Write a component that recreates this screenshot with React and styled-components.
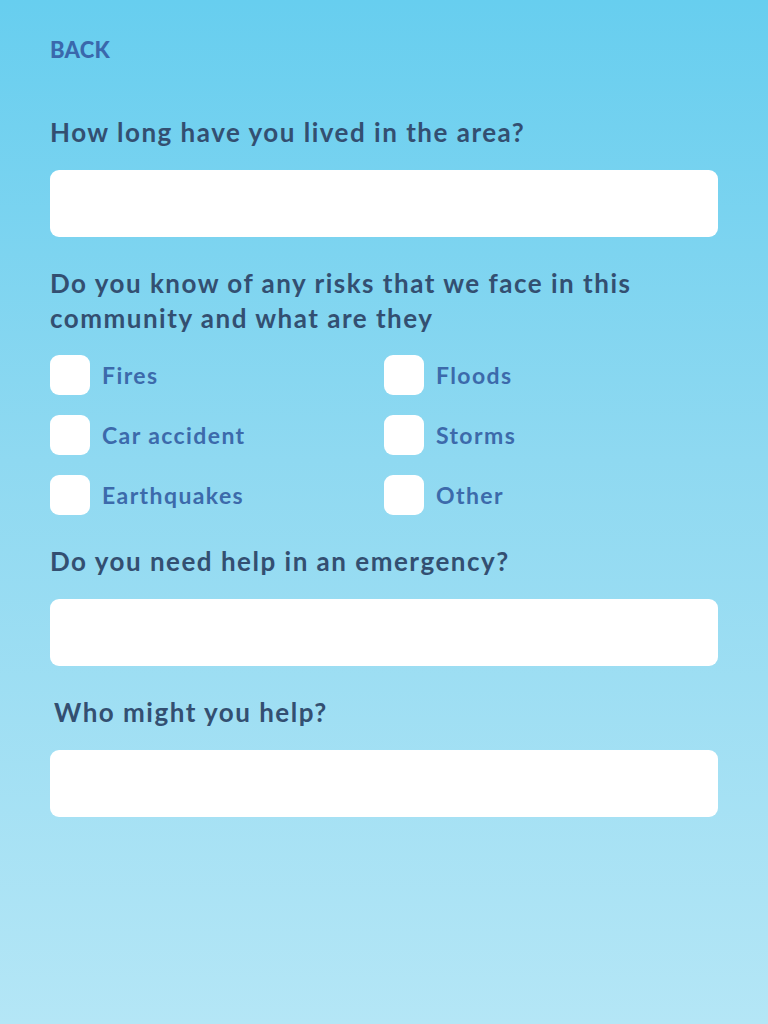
import React, { useState } from 'react';
import styled, { createGlobalStyle } from 'styled-components';

const GlobalStyle = createGlobalStyle`
  html, body {
    margin: 0;
    padding: 0;
  }
  body {
    font-family: 'Lato', 'Noto Sans', sans-serif;
  }
  * {
    box-sizing: border-box;
  }
`;

const Page = styled.div`
  min-height: 1024px;
  background: linear-gradient(180deg, #67ceef 0%, #8fd9f1 45%, #b4e6f6 100%);
  padding: 38px 50px 60px;
  display: flex;
  flex-direction: column;
`;

const BackLink = styled.a`
  align-self: flex-start;
  font-size: 22px;
  font-weight: 900;
  color: #3a68ac;
  text-decoration: none;
  letter-spacing: 0.2px;
  cursor: pointer;
  line-height: 24px;
`;

const Question = styled.h2`
  margin: ${(p) => p.$top || 0}px 0 0 ${(p) => p.$indent || 0}px;
  font-size: 26px;
  font-weight: 700;
  line-height: 35px;
  letter-spacing: 1.5px;
  color: #334f71;
`;

const TextField = styled.input`
  display: block;
  width: 100%;
  height: 67px;
  margin-top: ${(p) => p.$top || 0}px;
  border: none;
  border-radius: 9px;
  background: #fff;
  padding: 0 18px;
  font-family: inherit;
  font-size: 20px;
  color: #334f71;
  outline: none;
`;

const OptionGrid = styled.div`
  margin-top: 19px;
  display: grid;
  grid-template-columns: 334px 1fr;
  row-gap: 20px;
`;

const Option = styled.label`
  display: flex;
  align-items: center;
  gap: 12px;
  height: 40px;
  cursor: pointer;
`;

const Box = styled.span`
  width: 40px;
  height: 40px;
  flex: none;
  border-radius: 9px;
  background: #fff;
  display: flex;
  align-items: center;
  justify-content: center;
  color: #3a68ac;
  font-size: 24px;
  font-weight: 900;
`;

const OptionText = styled.span`
  font-size: 23px;
  font-weight: 700;
  letter-spacing: 1.4px;
  color: #3c6aab;
`;

const options = ['Fires', 'Floods', 'Car accident', 'Storms', 'Earthquakes', 'Other'];

export default function App() {
  const [checked, setChecked] = useState({});

  const toggle = (name) => {
    setChecked((c) => ({ ...c, [name]: !c[name] }));
  };

  return (
    <>
      <GlobalStyle />
      <Page>
        <BackLink>BACK</BackLink>

        <Question $top={53}>How long have you lived in the area?</Question>
        <TextField $top={20} />

        <Question $top={29}>
          Do you know of any risks that we face in this
          <br />
          community and what are they
        </Question>
        <OptionGrid>
          {options.map((name) => (
            <Option key={name} onClick={() => toggle(name)}>
              <Box>{checked[name] ? '✓' : ''}</Box>
              <OptionText>{name}</OptionText>
            </Option>
          ))}
        </OptionGrid>

        <Question $top={29}>Do you need help in an emergency?</Question>
        <TextField $top={20} />

        <Question $top={29} $indent={4}>Who might you help?</Question>
        <TextField $top={20} />
      </Page>
    </>
  );
}
